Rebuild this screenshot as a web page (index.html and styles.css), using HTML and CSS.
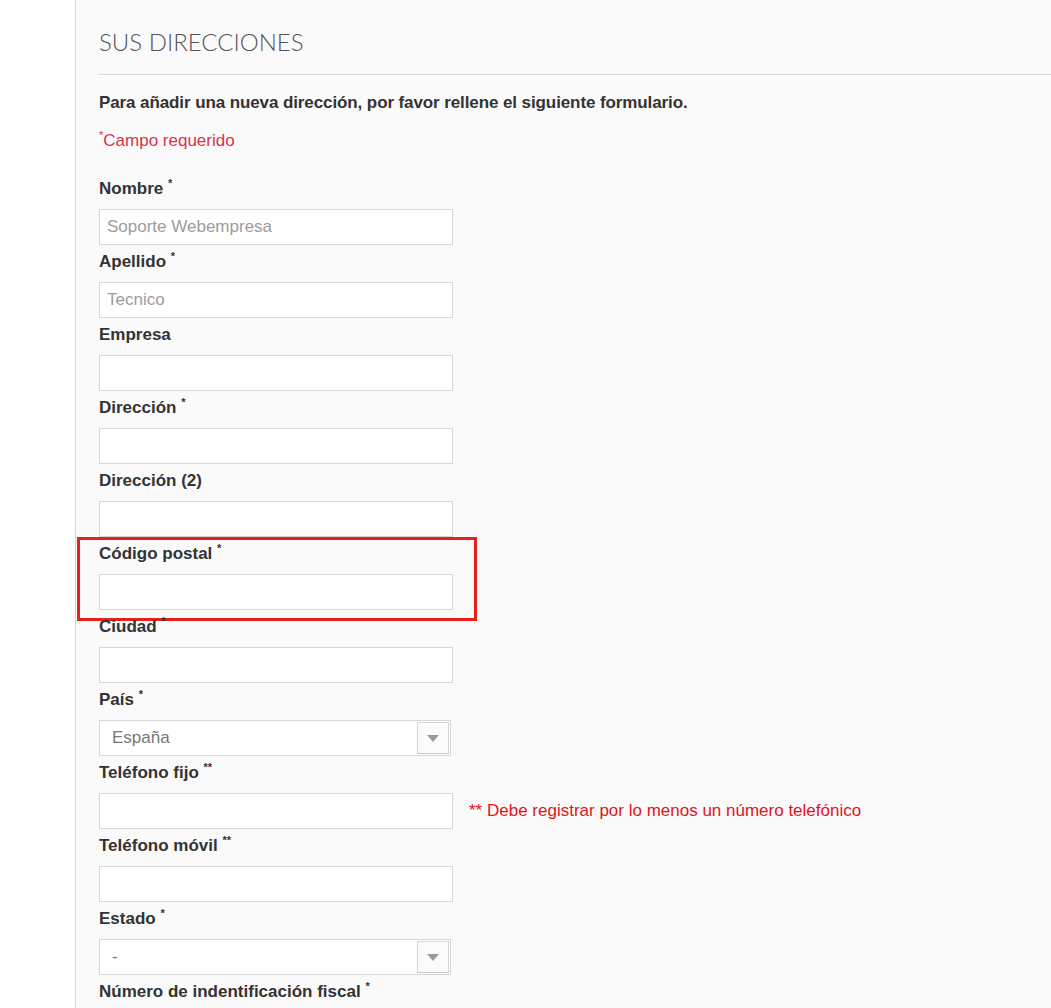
FILE: index.html
```html
<!DOCTYPE html>
<html lang="es">
<head>
    <meta charset="UTF-8">
    <title>Sus direcciones</title>
    <link rel="stylesheet" href="styles.css">
</head>
<body>
<div class="page">
    <div class="side"></div>
    <div class="main">
        <h1 class="title">Sus direcciones</h1>
        <p class="intro">Para añadir una nueva dirección, por favor rellene el siguiente formulario.</p>
        <p class="required"><sup>*</sup>Campo requerido</p>

        <form class="addr">
            <div class="group">
                <label>Nombre <sup>*</sup></label>
                <input class="field" type="text" placeholder="Soporte Webempresa">
            </div>
            <div class="group">
                <label>Apellido <sup>*</sup></label>
                <input class="field" type="text" placeholder="Tecnico">
            </div>
            <div class="group">
                <label>Empresa</label>
                <input class="field" type="text">
            </div>
            <div class="group">
                <label>Dirección <sup>*</sup></label>
                <input class="field" type="text">
            </div>
            <div class="group">
                <label>Dirección (2)</label>
                <input class="field" type="text">
            </div>
            <div class="group mark">
                <label>Código postal <sup>*</sup></label>
                <input class="field" type="text">
                <span class="box"></span>
            </div>
            <div class="group">
                <label>Ciudad <sup>*</sup></label>
                <input class="field" type="text">
            </div>
            <div class="group">
                <label>País <sup>*</sup></label>
                <div class="select">
                    <span class="value">España</span>
                    <span class="arrow"></span>
                </div>
            </div>
            <div class="group">
                <label>Teléfono fijo <sup>**</sup></label>
                <div class="row">
                    <input class="field" type="text">
                    <span class="note">** Debe registrar por lo menos un número telefónico</span>
                </div>
            </div>
            <div class="group">
                <label>Teléfono móvil <sup>**</sup></label>
                <input class="field" type="text">
            </div>
            <div class="group">
                <label>Estado <sup>*</sup></label>
                <div class="select">
                    <span class="value">-</span>
                    <span class="arrow"></span>
                </div>
            </div>
            <div class="group">
                <label>Número de indentificación fiscal <sup>*</sup></label>
                <input class="field" type="text">
            </div>
        </form>
    </div>
</div>
</body>
</html>
```

FILE: styles.css
```css
*{
    margin: 0;
    padding: 0;
    box-sizing: border-box;
}
html,body{
    height: 100%;
    background-color: #fff;
    font-family: "Liberation Sans", Arial, sans-serif;
    color: #333;
    overflow: hidden;
}
sup{
    line-height: 0;
}
.page{
    display: flex;
    min-height: 100%;
}
.side{
    width: 75px;
    flex-shrink: 0;
    background-color: #fff;
}
.main{
    flex: 1;
    background-color: #fafafa;
    border-left: 1px solid #d6d4d4;
    padding: 27px 0 0 23px;
}
.title{
    font-family: Lato, "Open Sans", sans-serif;
    font-weight: 300;
    font-size: 24px;
    line-height: 30px;
    color: #555;
    text-transform: uppercase;
    padding-bottom: 17px;
    border-bottom: 1px solid #d6d4d4;
    box-shadow: 0 1px 0 #fff;
}
.intro{
    font-size: 17px;
    font-weight: bold;
    line-height: 20px;
    letter-spacing: -0.1px;
    margin-top: 18px;
}
.required{
    color: #d83347;
    font-size: 17px;
    line-height: 20px;
    margin-top: 18px;
}
.required sup{
    font-size: 11px;
    vertical-align: 7px;
}
.addr{
    margin-top: 28px;
}
.group{
    position: relative;
    margin-bottom: 7px;
}
.group label{
    display: block;
    font-size: 17px;
    font-weight: bold;
    line-height: 20px;
    margin-bottom: 10px;
}
.group label sup{
    font-size: 11px;
    vertical-align: 7px;
}
.field{
    display: block;
    width: 354px;
    height: 36px;
    border: 1px solid #d6d4d4;
    background-color: #fff;
    padding: 0 7px;
    font-family: "Liberation Sans", Arial, sans-serif;
    font-size: 17px;
    color: #777;
    outline: none;
}
.field::placeholder{
    color: #9c9c9c;
}
.select{
    display: flex;
    align-items: center;
    justify-content: space-between;
    width: 352px;
    height: 36px;
    border: 1px solid #d6d4d4;
    background-color: #fff;
    padding: 1px 1px 1px 12px;
}
.select .value{
    font-size: 17px;
    color: #777;
}
.select .arrow{
    position: relative;
    width: 32px;
    height: 32px;
    border: 1px solid #d6d4d4;
    border-bottom-color: #c8c8c8;
    background-color: #fbfbfb;
}
.select .arrow:after{
    content: "";
    position: absolute;
    left: 9px;
    top: 12px;
    border-left: 6px solid transparent;
    border-right: 6px solid transparent;
    border-top: 7px solid #9a9a9a;
}
.row{
    display: flex;
    align-items: center;
    gap: 16px;
}
.note{
    color: #e3121b;
    font-size: 17px;
}
.mark .box{
    position: absolute;
    left: -22px;
    top: -7px;
    width: 400px;
    height: 84px;
    border: 3px solid #e6201a;
}
```
